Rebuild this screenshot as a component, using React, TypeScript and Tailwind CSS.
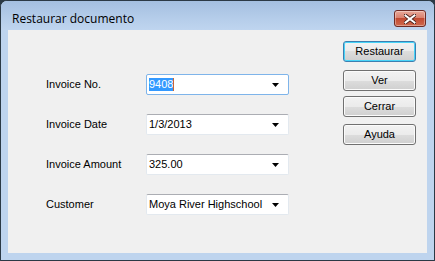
import React from 'react';

const fields = [
    { label: 'Invoice No.', value: '9408', focused: true },
    { label: 'Invoice Date', value: '1/3/2013' },
    { label: 'Invoice Amount', value: '325.00' },
    { label: 'Customer', value: 'Moya River Highschool' },
];

const buttons = ['Restaurar', 'Ver', 'Cerrar', 'Ayuda'];

const Arrow = () => (
    <svg width="7" height="4" viewBox="0 0 7 4" className="block">
        <path d="M0 0h7L3.5 4z" fill="#000" />
    </svg>
);

const Combo: React.FC<{ value: string; focused?: boolean }> = ({ value, focused }) => (
    <div
        className={`flex items-center w-[143px] h-[21px] bg-white border rounded-[2px] ${
            focused ? 'border-[#7eb4ea]' : 'border-[#e3e9ef] border-t-[#abadb3]'
        }`}
    >
        <div className="flex-1 pl-[2px] flex items-center">
            {focused ? (
                <span className="flex items-center">
                    <span className="bg-[#3399ff] text-white leading-[13px] px-[0px]">{value}</span>
                    <span className="w-px h-[13px] bg-[#cc6633]" />
                </span>
            ) : (
                <span className="leading-[13px]">{value}</span>
            )}
        </div>
        <div className="w-[17px] flex items-center justify-start pl-[1px]">
            <Arrow />
        </div>
    </div>
);

const WinButton: React.FC<{ label: string; isDefault?: boolean }> = ({ label, isDefault }) => (
    <div
        className={`w-[73px] h-[21px] rounded-[3px] border flex items-center justify-center ${
            isDefault
                ? 'border-[#3c7fb1] shadow-[inset_0_0_0_1px_#48d4f8]'
                : 'border-[#707070] shadow-[inset_0_0_0_1px_#fbfbfb]'
        } bg-[linear-gradient(#f2f2f2_0%,#ebebeb_50%,#dddddd_50%,#cfcfcf_100%)]`}
    >
        <span className="leading-none">{label}</span>
    </div>
);

const CloseButton = () => (
    <div className="w-[32px] h-[17px] rounded-[3px] border border-[#6d2a24] bg-[linear-gradient(#e9a99a_0%,#d9816f_45%,#c24a32_50%,#cf6a4f_100%)] shadow-[inset_0_0_0_1px_rgba(255,255,255,0.35)] flex items-center justify-center">
        <svg width="12" height="10" viewBox="0 0 12 10">
            <path d="M1 1l10 8M11 1L1 9" stroke="#3f1a16" strokeWidth="3.6" strokeLinecap="square" />
            <path d="M1.5 1.5l9 7M10.5 1.5l-9 7" stroke="#fff" strokeWidth="2" strokeLinecap="square" />
        </svg>
    </div>
);

export default function App() {
    return (
        <div className="w-[435px] h-[261px] bg-[#2b3945]">
            <div className="w-full h-full flex flex-col rounded-t-[7px] border border-[#2b3945] bg-[#bed4ee] overflow-hidden">
                {/* Title bar */}
                <div className="h-[29px] flex items-start justify-between bg-[linear-gradient(#a4bfe0_0%,#b5cdea_60%,#bfd5ef_100%)] shrink-0">
                    <span className="pl-[11px] pt-[10px] text-[12px] leading-[15px] text-black [font-family:'Open_Sans','DejaVu_Sans',sans-serif]">
                        Restaurar documento
                    </span>
                    <div className="pt-[9px] pr-[8px]">
                        <CloseButton />
                    </div>
                </div>

                {/* Client area */}
                <div className="flex-1 px-[7px] pb-[7px]">
                    <div className="h-full bg-[#f0f0f0] flex text-[11px] text-black [font-family:'Liberation_Sans',Arial,sans-serif]">
                        <div className="w-[335px] pl-[38px] pt-[44px] flex flex-col gap-[20px]">
                            {fields.map((f) => (
                                <div key={f.label} className="flex items-center h-[21px] -mb-[1px]">
                                    <span className="w-[100px] leading-[13px]">{f.label}</span>
                                    <Combo value={f.value} focused={f.focused} />
                                </div>
                            ))}
                        </div>
                        <div className="pt-[11px] flex flex-col">
                            <WinButton label={buttons[0]} isDefault />
                            <div className="h-[8px]" />
                            <WinButton label={buttons[1]} />
                            <div className="h-[5px]" />
                            <WinButton label={buttons[2]} />
                            <div className="h-[7px]" />
                            <WinButton label={buttons[3]} />
                        </div>
                    </div>
                </div>
            </div>
        </div>
    );
}
